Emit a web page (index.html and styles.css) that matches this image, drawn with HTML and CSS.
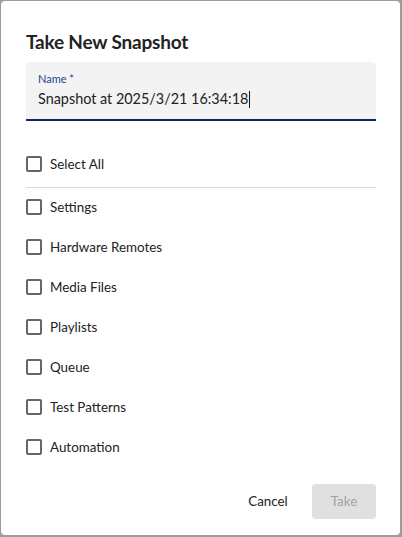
FILE: index.html
```html
<!DOCTYPE html>
<html>
<head>
<meta charset="utf-8">
<link rel="stylesheet" href="styles.css">
</head>
<body>
<div class="dialog">
  <h2 class="title">Take New Snapshot</h2>
  <div class="field">
    <label class="field-label">Name *</label>
    <div class="field-value">Snapshot at 2025/3/21 16:34:18<span class="caret"></span></div>
  </div>
  <div class="options">
    <label class="option select-all"><span class="box"></span>Select All</label>
    <div class="divider"></div>
    <label class="option"><span class="box"></span>Settings</label>
    <label class="option"><span class="box"></span>Hardware Remotes</label>
    <label class="option"><span class="box"></span>Media Files</label>
    <label class="option"><span class="box"></span>Playlists</label>
    <label class="option"><span class="box"></span>Queue</label>
    <label class="option"><span class="box"></span>Test Patterns</label>
    <label class="option"><span class="box"></span>Automation</label>
  </div>
  <div class="actions">
    <button class="btn btn-text">Cancel</button>
    <button class="btn btn-disabled">Take</button>
  </div>
</div>
</body>
</html>
```
FILE: styles.css
```css
* { box-sizing: border-box; }
html, body { margin: 0; height: 100%; }
body {
  background: #9c9c9c;
  padding: 1px 2px 2px 1px;
  font-family: "Lato", "Noto Sans", sans-serif;
  color: #222;
}
.dialog {
  background: #fff;
  height: 534px;
  border-radius: 4px;
  padding: 29px 24px 0 25px;
  display: flex;
  flex-direction: column;
}
.title {
  margin: 0;
  font-size: 19px;
  font-weight: 700;
  color: #222;
  line-height: 24px;
  letter-spacing: -0.2px;
}
.field {
  margin-top: 8px;
  background: #f3f3f3;
  border-radius: 4px 4px 0 0;
  border-bottom: 2px solid #0e2a5c;
  height: 59px;
  padding: 10px 12px 0 12px;
}
.field-label {
  display: block;
  font-size: 11px;
  line-height: 14px;
  color: #1c3f8c;
  font-weight: 400;
}
.field-value {
  font-size: 14.4px;
  line-height: 22px;
  color: #222;
  margin-top: 2px;
  display: flex;
  align-items: center;
}
.caret {
  display: inline-block;
  width: 1px;
  height: 17px;
  background: #111;
  margin-left: 1px;
}
.options {
  margin-top: 33px;
  display: flex;
  flex-direction: column;
}
.option {
  display: flex;
  align-items: center;
  height: 20px;
  font-size: 13.4px;
  color: #222;
}
.option + .option { margin-top: 20px; }
.divider {
  height: 1px;
  background: #dcdcdc;
  margin: 13px 0 9px;
}
.divider + .option { margin-top: 0; }
.box {
  width: 16px;
  height: 16px;
  border: 2px solid #666;
  border-radius: 2px;
  margin-right: 8px;
  flex: none;
}
.actions {
  margin-top: auto;
  margin-bottom: 16px;
  display: flex;
  justify-content: flex-end;
  align-items: center;
  gap: 12px;
}
.btn {
  font-family: inherit;
  font-size: 13.4px;
  border: none;
  border-radius: 4px;
  height: 35px;
  padding: 0 0 2px;
  background: transparent;
}
.btn-text { color: #222; width: 64px; }
.btn-disabled {
  background: #e0e0e0;
  color: #a3a3a3;
  width: 64px;
}
```
